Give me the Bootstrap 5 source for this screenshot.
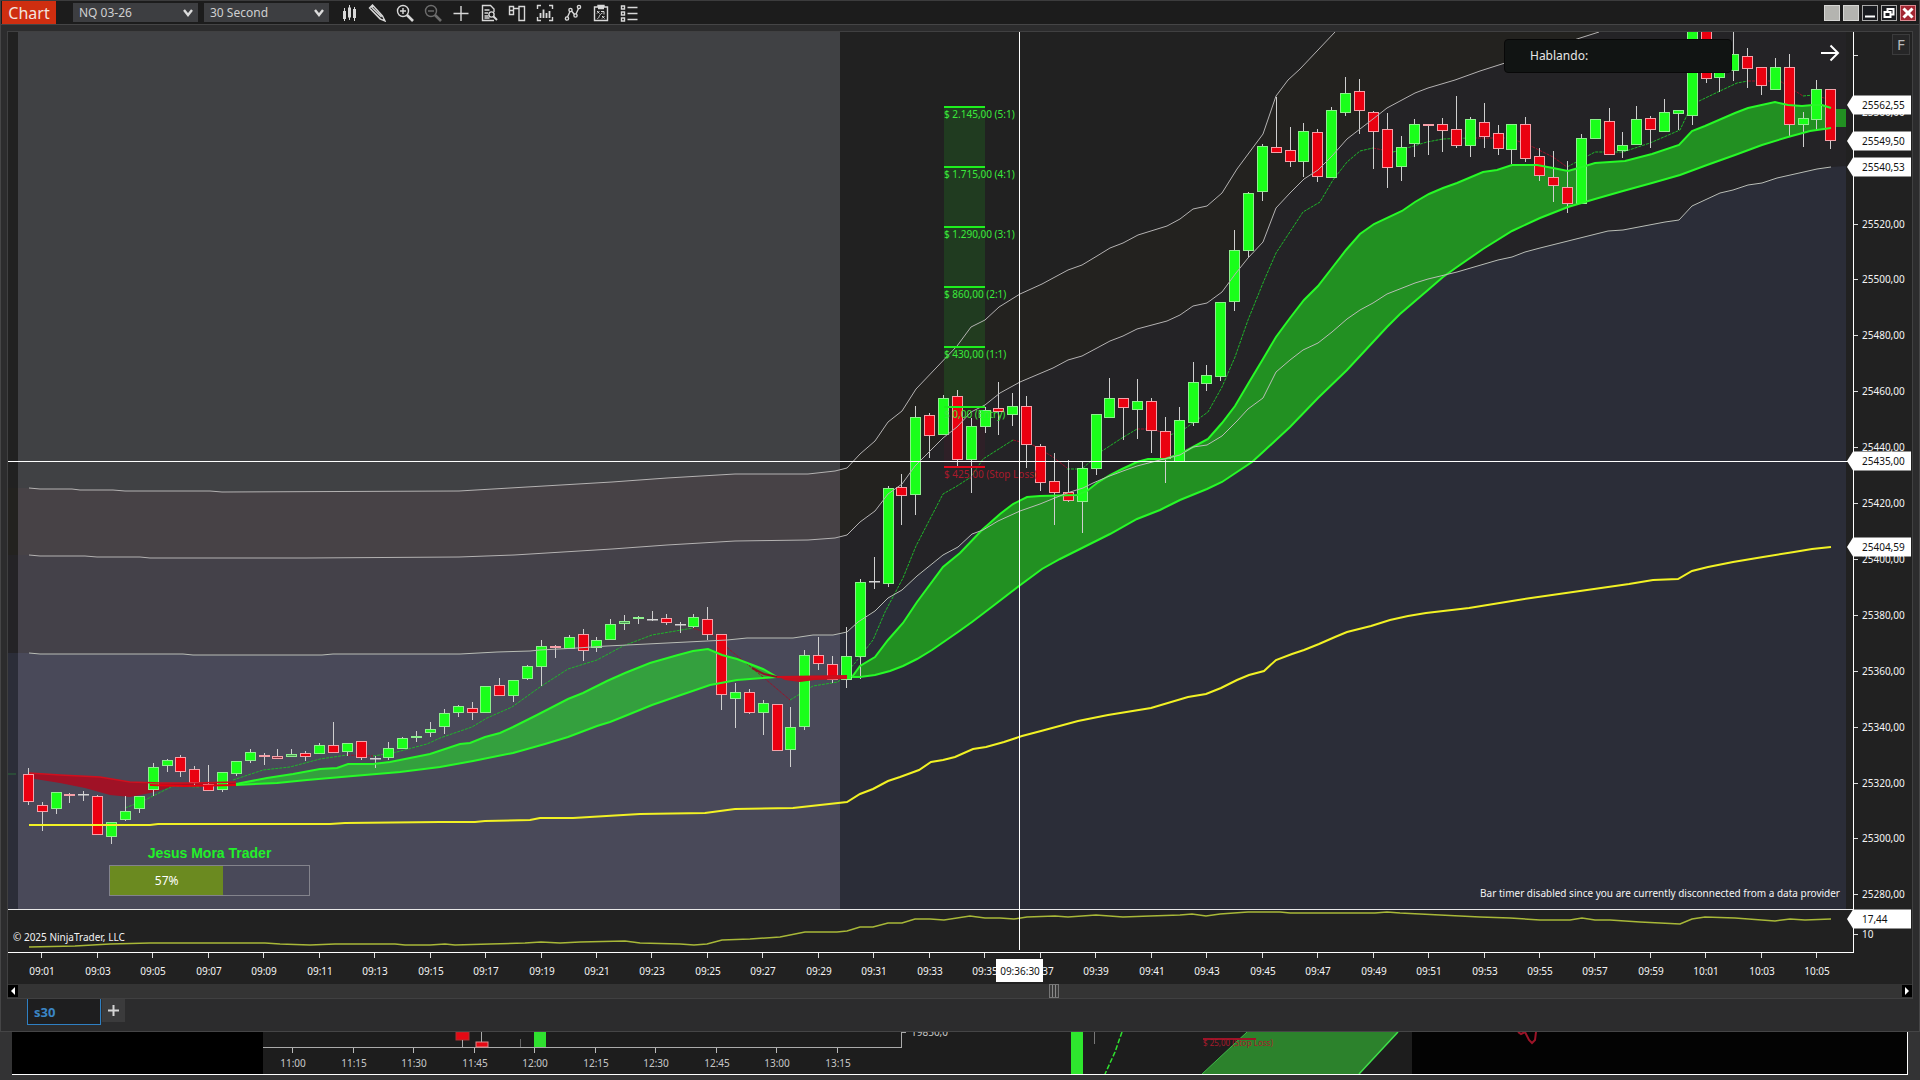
<!DOCTYPE html>
<html lang="es">
<head>
<meta charset="utf-8">
<meta name="viewport" content="width=device-width, initial-scale=1">
<title>Chart - NQ 03-26</title>
<link href="https://cdn.jsdelivr.net/npm/bootstrap@5.3.0/dist/css/bootstrap.min.css" rel="stylesheet">
<style>
  body{background:#333334;color:#fff;font-family:"Noto Sans","Open Sans",sans-serif;font-size:12px;overflow-x:hidden}
  .win{background:#2c2c2d;border:1px solid #454546;border-top:0}
  .titlebar{background:#1c1c1c;height:25px;border-top:1px solid #3c3c3d;border-bottom:1px solid #454546}
  .brand{background:#cf2e10;color:#f3e3df;font-size:16px;line-height:22px;height:23px;width:54px;border:0;padding:0;margin-left:1px;margin-right:11px}
  .picks{gap:6px;padding:0 6px}
  .picker{height:19px;width:125px;border:0;border-radius:0;padding:0 20px 0 6px;font-size:12px;line-height:19px;color:#cfcfd0;background-color:#3d3e41;background-size:10px 8px;background-position:right 5px center;background-image:url("data:image/svg+xml,%3csvg xmlns='http://www.w3.org/2000/svg' viewBox='0 0 10 8'%3e%3cpath d='M1 1l4 5 4-5' fill='none' stroke='%23dcdcdc' stroke-width='2.4'/%3e%3c/svg%3e")}
  .tool{width:28px;height:22px;border:0;padding:0;background:none;color:#d8d8d8}
  .tool svg{width:18px;height:18px;fill:none;stroke:currentColor;stroke-width:1.4}
  .tool.off{color:#6d6d6d}
  .winctl{gap:3px;padding-right:3px}
  .ctl{width:16px;height:16px;border:1px solid #aaa;padding:0;background:#191b1f}
  .ctl svg{width:14px;height:14px;fill:none;stroke:#fff;stroke-width:2}
  .ctl.plain{background:#b4b4b0;border-color:#d6d6d4}
  .ctl.shut{background:#a32632;border-color:#d98a92}
  .frame{margin:6px 6px 0;border:1px solid #404041}
  .plot{display:block;width:100%;height:auto;background:#212121}
  .plot text,.under text{font-family:"Noto Sans","Open Sans",sans-serif;font-size:10px;fill:#f4f4f4}
  .plot text.ink{fill:#111}
  .plot text.rr{fill:#3bea3b}
  .plot text.stop{fill:#a81a2c}
  .talk{right:180px;top:7px;width:228px;height:34px;background:#111413;border:1px solid #080808;border-radius:4px;padding-left:25px;font-size:12px;line-height:32px;color:#e6e6e6}
  .arrow{right:72px;top:12px;border:0;background:none;padding:0}
  .fixbtn{right:2px;top:2px;width:18px;height:21px;background:#262627;border:1px solid #3b3b3c;color:#b8b8ba;font-size:15px;line-height:17px;padding:0}
  .buyers{left:101px;bottom:88px;width:201px}
  .buyers .title{font-family:"Liberation Sans",Arial,sans-serif;font-weight:700;font-size:14px;line-height:16px;color:#22f02a;margin-bottom:4px}
  .buyers .progress{height:31px;border-radius:0;background:none;border:1px solid #83838c}
  .buyers .progress-bar{background:#6b8a20;font-size:12px;color:#fff}
  .scroller{height:14px;background:#343434}
  .step{width:10px;height:12px;border:0;padding:0;background:#000;color:#fff}
  .step svg{display:block;width:10px;height:12px;fill:#fff}
  .slide{appearance:none;background:none;height:14px;margin:0;min-width:0}
  .slide::-webkit-slider-thumb{appearance:none;width:10px;height:14px;border:1px solid #757575;background:repeating-linear-gradient(90deg,#3a3a3a 0 2px,#8a8a8a 2px 3px)}
  .tabs{height:32px;padding-left:26px}
  .tabbtn{width:74px;height:26px;background:#1e1e1f;border:1px solid #2f80c3;border-top:0;color:#3b86c6;font-family:"Open Sans","Noto Sans",sans-serif;font-weight:700;font-size:13px;line-height:24px;text-align:left;padding:0 6px}
  .addbtn{width:23px;height:23px;background:#3b3b3c;border:0;padding:0;color:#d5d5d5;margin-left:1px}
  .addbtn svg{width:11px;height:11px;stroke:currentColor;stroke-width:2}
  .under{display:block;width:100%;height:auto}
</style>
<script src="https://cdn.jsdelivr.net/npm/bootstrap@5.3.0/dist/js/bootstrap.bundle.min.js"></script>
</head>
<body>
<main class="win d-flex flex-column">
  <header class="titlebar d-flex align-items-center">
    <button class="brand" type="button">Chart</button>
    <div class="picks d-flex">
      <select class="form-select picker" aria-label="Instrument"><option>NQ 03-26</option></select>
      <select class="form-select picker" aria-label="Interval"><option>30 Second</option></select>
    </div>
    <nav class="d-flex" aria-label="Chart tools">
      <button class="tool" type="button" aria-label="Chart style"><svg viewBox="0 0 18 18"><path d="M4.500 4v13M9.500 1v15M14.500 3v14" stroke-width="1"/><path d="M4.500 7v8M9.500 3.500v10M14.500 5v9" stroke-width="3"/></svg></button>
      <button class="tool" type="button" aria-label="Drawing tools"><svg viewBox="0 0 18 18"><path d="M1.500 4l3-3 10 11 2.500 5-5-2zM3 5.500l9.500 9.500M4.500 4l9 9M3 2.500l2 2"/></svg></button>
      <button class="tool" type="button" aria-label="Zoom in"><svg viewBox="0 0 18 18"><circle cx="7" cy="7" r="5.500"/><path d="M4 7h6M7 4v6"/><path d="M11 11l6 6" stroke-width="2.600"/></svg></button>
      <button class="tool off" type="button" aria-label="Zoom out" disabled><svg viewBox="0 0 18 18"><circle cx="7" cy="7" r="5.500"/><path d="M4 7h6"/><path d="M11 11l6 6" stroke-width="2.600"/></svg></button>
      <button class="tool" type="button" aria-label="Crosshair"><svg viewBox="0 0 18 18"><path d="M1.500 9.500h15M9 2v15"/></svg></button>
      <button class="tool" type="button" aria-label="Data box"><svg viewBox="0 0 18 18"><path d="M14 8V5l-3.500-3.500H2.500v15H14M4.500 6h5M4.500 9h3.500M4.500 12h4M4.500 14h5"/><circle cx="11.500" cy="10.500" r="2.600"/><path d="M13.500 12.500l3.500 3.500" stroke-width="2"/></svg></button>
      <button class="tool" type="button" aria-label="Chart trader"><svg viewBox="0 0 18 18"><path d="M1.500 2.500h4v4h-4zM1.500 6.500h4v4h-4zM11 2.500h5.500v14H11zM5.500 4.500H11"/></svg></button>
      <button class="tool" type="button" aria-label="Data series"><svg viewBox="0 0 18 18"><path d="M5 1.500H1.500V5M13 1.500h3.500V5M5 16.500H1.500V13M13 16.500h3.500V13"/><path d="M4.500 9v5M7.500 5.500V14M10.500 9v5M13.500 7v7" stroke-width="1.800"/></svg></button>
      <button class="tool" type="button" aria-label="Indicators"><svg viewBox="0 0 18 18"><circle cx="3" cy="14.500" r="1.600"/><circle cx="6.500" cy="6" r="1.600"/><circle cx="11.500" cy="11.500" r="1.600"/><circle cx="15" cy="3" r="1.600"/><path d="M3.500 13L6 7.500M7.500 7l3 3.500M12 10l2.500-5.500"/></svg></button>
      <button class="tool" type="button" aria-label="Strategies"><svg viewBox="0 0 18 18"><path d="M2.500 3h13v13.500h-13zM6 3V1.500h6V3M6 4.500h6"/><path d="M5 7l2.500 2.500M7.500 7L5 9.500M10 12l2.500 2.500M12.500 12L10 14.500M5.500 14.500c2 0 1-4 5-5.500M9 7.500h3v3" stroke-width="1"/></svg></button>
      <button class="tool" type="button" aria-label="Properties"><svg viewBox="0 0 18 18"><path d="M1.500 2h3v3h-3zM1.500 8h3v3h-3zM1.500 14h3v3h-3zM7.500 3.500h10M7.500 9.500h10M7.500 15.500h10"/></svg></button>
    </nav>
    <div class="winctl d-flex ms-auto">
      <button class="ctl plain" type="button" aria-label="Link instrument"></button>
      <button class="ctl plain" type="button" aria-label="Link interval"></button>
      <button class="ctl d-flex" type="button" aria-label="Minimize"><svg viewBox="0 0 14 14"><path d="M2 10.500h10"/></svg></button>
      <button class="ctl d-flex" type="button" aria-label="Restore"><svg viewBox="0 0 14 14"><path d="M5.500 6V3h6v5.500H9M2.500 6h6v5h-6z"/></svg></button>
      <button class="ctl shut d-flex" type="button" aria-label="Close"><svg viewBox="0 0 14 14"><path d="M2.500 2.500l9 9M11.500 2.500l-9 9" stroke-width="3"/></svg></button>
    </div>
  </header>

  <section class="frame">
    <div class="position-relative">
      <svg class="plot" id="plot" viewBox="8 32 1904 952" role="img" aria-label="NQ 03-26, 30 Second"></svg>
      <div class="talk position-absolute">Hablando:</div>
      <button class="arrow position-absolute d-flex" type="button" aria-label="Go to last bar"><svg width="20" height="18" viewBox="0 0 20 18" fill="none" stroke="#fff" stroke-width="2"><path d="M1 9h17M10.500 1.500L18 9l-7.500 7.500"/></svg></button>
      <button class="fixbtn position-absolute" type="button">F</button>
      <div class="buyers position-absolute">
        <div class="title text-center" id="lbl">Jesus Mora Trader</div>
        <div class="progress" role="progressbar" aria-labelledby="lbl" aria-valuenow="57" aria-valuemin="0" aria-valuemax="100">
          <div class="progress-bar" style="width:57%">57%</div>
        </div>
      </div>
    </div>
    <div class="scroller d-flex align-items-center">
      <button class="step" type="button" aria-label="Scroll left"><svg viewBox="0 0 10 12"><path d="M7 2v8L3 6z"/></svg></button>
      <input class="slide flex-grow-1" type="range" min="0" max="1000" value="550" aria-label="Scroll chart">
      <button class="step" type="button" aria-label="Scroll right"><svg viewBox="0 0 10 12"><path d="M3 2v8l4-4z"/></svg></button>
    </div>
  </section>
  <nav class="tabs d-flex align-items-start" aria-label="Tabs">
    <button class="tabbtn" type="button">s30</button>
    <button class="addbtn d-flex align-items-center justify-content-center" type="button" aria-label="Add tab"><svg viewBox="0 0 11 11"><path d="M0 5.500h11M5.500 0v11"/></svg></button>
  </nav>
</main>
<svg class="under" id="under" viewBox="0 1032 1920 48" role="img" aria-label="Background chart"></svg>

<script>
// Bars: [index, body top, body bottom, high, low, g = up / r = down / d = doji]
const bars = [
[0,774,802,768,805,'r'],[1,805,812,802,831,'r'],[2,792,809,792,814,'g'],[3,794,796,793,803,'r'],[4,794,794,791,801,'d'],[5,796,835,795,835,'r'],[6,822,837,822,844,'g'],[7,811,820,796,821,'g'],[8,796,809,796,813,'g'],[9,767,790,763,796,'g'],[10,760,766,759,772,'g'],[11,757,772,755,777,'r'],[12,769,783,766,785,'r'],[13,784,791,765,791,'r'],[14,772,790,772,792,'g'],[15,761,774,761,776,'g'],[16,752,761,749,763,'g'],[17,755,757,753,765,'r'],[18,756,759,749,759,'r'],[19,754,757,749,757,'g'],[20,753,757,751,761,'r'],[21,745,754,743,754,'g'],[22,745,753,722,753,'r'],[23,743,752,743,756,'g'],[24,741,758,741,760,'r'],[25,758,758,756,768,'d'],[26,748,758,742,760,'g'],[27,738,749,737,749,'g'],[28,736,738,731,742,'g'],[29,729,733,722,737,'g'],
[30,713,727,709,734,'g'],[31,706,713,705,717,'g'],[32,708,713,702,720,'r'],[33,686,713,686,713,'g'],[34,685,696,678,696,'r'],[35,680,696,680,702,'g'],[36,666,679,665,680,'g'],[37,646,667,640,686,'g'],[38,646,648,645,658,'r'],[39,637,649,635,649,'g'],[40,634,651,629,661,'r'],[41,640,648,637,652,'g'],[42,624,640,619,640,'g'],[43,621,624,615,630,'g'],[44,617,619,616,624,'g'],[45,619,619,611,621,'d'],[46,618,623,614,625,'r'],[47,624,624,622,633,'d'],[48,617,627,614,628,'g'],[49,619,635,607,640,'r'],
[50,634,695,634,710,'r'],[51,692,699,683,728,'g'],[52,692,713,689,714,'r'],[53,703,713,700,735,'g'],[54,704,751,704,751,'r'],[55,727,750,707,767,'g'],[56,655,727,650,730,'g'],[57,655,664,637,670,'r'],[58,664,680,656,683,'r'],[59,656,680,627,688,'g'],[60,582,657,579,679,'g'],[61,581,581,557,589,'d'],[62,488,584,486,587,'g'],[63,487,496,474,525,'r'],[64,417,495,406,515,'g'],[65,415,436,413,458,'r'],[66,398,435,395,435,'g'],[67,396,460,390,468,'r'],[68,426,460,418,493,'g'],[69,410,427,407,433,'g'],[70,408,412,382,435,'r'],[71,406,415,393,426,'g'],[72,406,445,396,468,'r'],[73,446,483,444,491,'r'],[74,481,493,453,525,'r'],[75,492,501,460,502,'r'],[76,468,502,462,533,'g'],[77,414,469,414,475,'g'],[78,398,418,378,418,'g'],[79,398,408,398,440,'r'],[80,401,410,379,439,'g'],[81,401,431,398,453,'r'],
[82,431,459,417,483,'r'],[83,420,462,407,462,'g'],[84,382,423,362,426,'g'],[85,375,384,365,391,'g'],[86,302,377,302,381,'g'],[87,250,302,230,311,'g'],[88,193,251,192,257,'g'],[89,146,192,144,201,'g'],[90,147,153,97,153,'r'],[91,150,162,127,167,'r'],[92,131,162,123,177,'g'],[93,132,177,129,182,'r'],[94,110,178,107,178,'g'],[95,93,113,77,116,'g'],[96,91,111,79,134,'r'],[97,112,132,111,169,'r'],[98,129,168,113,188,'r'],[99,147,167,136,181,'g'],[100,124,144,119,157,'g'],[101,124,126,124,155,'r'],[102,124,131,118,152,'r'],[103,129,146,96,148,'r'],[104,119,146,117,157,'g'],[105,122,137,103,148,'r'],[106,133,149,125,155,'r'],[107,124,150,124,164,'g'],[108,124,159,117,162,'r'],[109,156,176,148,181,'r'],
[110,177,186,151,202,'r'],[111,187,204,161,213,'r'],[112,138,204,134,204,'g'],[113,119,139,119,139,'g'],[114,121,155,108,155,'r'],[115,145,151,132,158,'g'],[116,119,145,106,145,'g'],[117,118,130,116,148,'r'],[118,112,132,99,132,'g'],[119,110,114,110,130,'g'],[120,25,116,25,125,'g'],[121,25,79,25,83,'r'],[122,60,78,60,92,'g'],[123,54,71,25,81,'g'],[124,56,69,48,88,'r'],[125,67,86,67,95,'r'],[126,67,90,58,90,'g'],[127,67,125,54,136,'r'],[128,118,125,112,147,'g'],[129,89,120,80,130,'g'],[130,89,141,89,149,'r']];

const low = '29,653 40,654 183,654 193,655 322,655 333,654 460,654 497,652 530,651 540,650 577,648 607,646 647,644 687,642 727,640 747,638 793,638 813,635 833,635 847,632 858,622 875,611 888,598 902,590 917,576 943,555 958,547 972,534 983,530 998,521 1020,511 1040,504 1067,493 1083,488 1093,483 1107,477 1123,471 1137,466 1160,460 1180,455 1193,447 1207,445 1222,436 1237,421 1248,409 1263,398 1276,372 1290,360 1303,350 1318,343 1332,332 1347,319 1360,310 1373,303 1387,294 1415,283 1428,279 1457,272 1498,260 1512,257 1525,252 1540,248 1608,231 1623,230 1665,222 1679,220 1692,206 1720,193 1733,190 1748,185 1762,183 1777,178 1817,169 1831,167';
const mid = '29,555 40,556 85,556 97,557 140,557 150,558 306,558 459,557 514,555 612,549 667,545 735,541 808,540 835,538 847,535 860,522 875,511 888,494 902,484 915,466 943,438 957,427 971,412 985,405 1000,393 1020,382 1053,368 1068,360 1082,356 1097,348 1110,341 1123,336 1137,329 1167,321 1180,315 1193,306 1207,303 1222,292 1236,273 1248,258 1263,242 1276,208 1290,193 1304,179 1318,170 1332,156 1347,139 1360,129 1373,119 1387,108 1415,93 1428,88 1455,80 1480,71 1505,63 1577,39 1599,32';
const top1 = '29,488 40,489 72,489 80,490 113,490 125,491 210,491 222,492 459,491 527,487 612,482 667,478 735,474 808,474 835,471 847,468 860,454 875,441 888,422 902,411 916,389 957,346 971,327 985,320 999,307 1020,294 1042,284 1068,270 1082,265 1097,256 1110,248 1123,243 1138,235 1167,226 1180,219 1193,209 1207,206 1222,193 1237,169 1263,134 1276,96 1288,80 1300,69 1335,32';
const vwap = '29,825 150,825 158,824 330,824 345,823 440,822 475,822 485,821 530,820 540,818 573,818 640,814 705,813 735,809 793,808 847,802 860,794 873,789 888,781 900,777 919,770 931,762 943,760 955,757 973,749 986,747 1004,742 1022,736 1041,731 1078,721 1108,715 1151,708 1188,697 1206,694 1221,688 1237,680 1249,675 1264,671 1276,660 1292,654 1304,650 1319,644 1335,637 1347,632 1371,626 1390,620 1408,616 1426,613 1469,608 1512,601 1531,598 1580,591 1629,584 1653,580 1678,579 1692,571 1708,567 1733,562 1763,557 1794,552 1812,549 1831,547';
const up1 = '236,784 267,778 293,774 320,769 337,768 348,764 373,764 390,762 410,758 430,754 460,744 470,743 485,737 500,733 513,727 537,715 568,699 583,693 607,681 625,673 650,663 678,655 693,651 708,649 722,655 737,659 763,669 777,677';
const dn1 = '236,785 277,783 307,780 353,776 400,772 440,767 473,761 513,753 545,744 568,737 597,726 610,722 625,716 652,705 678,696 710,685 737,680 763,678 777,677';
const up2 = '852,677 860,666 875,657 888,640 903,623 917,602 943,567 960,553 982,530 1000,514 1013,504 1027,497 1040,496 1077,495 1087,491 1097,483 1110,475 1122,469 1137,462 1148,459 1165,459 1180,454 1193,447 1208,439 1222,423 1235,406 1248,384 1263,359 1276,337 1290,318 1304,300 1318,286 1332,268 1346,250 1360,234 1374,224 1402,211 1415,202 1429,194 1443,188 1457,183 1483,172 1497,170 1512,165 1537,165 1553,168 1568,171 1582,167 1595,163 1625,161 1652,154 1679,145 1692,131 1705,126 1735,113 1748,108 1775,102 1788,105 1802,106 1813,105 1822,105 1831,108';
const dn2 = '852,677 860,677 875,675 890,671 903,666 917,659 932,650 945,641 958,632 972,622 993,606 1019,586 1042,569 1060,559 1082,548 1110,534 1137,519 1160,510 1180,500 1207,489 1222,482 1252,462 1263,452 1276,440 1290,427 1318,398 1347,370 1387,327 1400,314 1428,290 1443,277 1457,267 1483,249 1512,231 1540,218 1568,207 1595,199 1623,191 1652,183 1680,175 1707,165 1735,155 1762,145 1788,137 1810,131 1831,128';
const ribT = '29,773 60,775 100,777 130,782 160,783 195,783 236,782';
const ribB = '29,778 60,783 85,788 110,795 130,797 150,793 175,786 195,786 236,785';
const osc = '29,947 75,946 110,944 150,943 265,943 280,944 310,945 335,944 395,944 405,945 430,945 445,944 455,945 490,944 525,943 541,942 560,943 580,942 625,941 640,943 680,944 694,945 707,944 722,940 750,939 780,937 805,932 837,932 847,931 860,927 873,927 888,923 902,923 915,919 930,919 944,920 970,916 985,918 1000,918 1014,919 1027,917 1055,916 1068,917 1096,915 1123,917 1150,916 1180,915 1192,914 1206,916 1220,914 1248,912 1280,912 1290,913 1375,913 1387,912 1400,913 1440,915 1480,917 1510,918 1540,920 1570,920 1582,918 1595,920 1610,920 1640,922 1680,924 1692,919 1705,917 1735,918 1775,921 1790,919 1805,920 1831,919';
// Fast average, alternating rising (green) and falling (red) runs
const fast = [
['g','125,808 143,801 173,786 200,787'],['g','233,780 263,770 290,767 320,759 347,755'],['r','347,755 373,756'],['g','373,756 393,753 427,744 440,738 472,727 487,718 512,707 540,687 568,669 597,660 623,646 652,635 693,628'],
['r','693,628 713,635 730,650 763,677 790,700'],['g','790,700 813,686 838,682 855,663 873,640 885,612 903,578 916,546 943,494 957,486 971,477 983,459 1013,440'],
['r','1013,440 1033,445 1053,457 1067,468'],['g','1067,469 1082,469 1102,451 1122,438 1137,429'],['r','1137,429 1152,429 1170,435'],
['g','1170,435 1183,430 1208,412 1222,387 1235,357 1248,320 1263,283 1276,253 1303,212 1320,202 1333,180 1347,162 1360,151 1373,148'],['r','1373,148 1393,152'],['g','1393,152 1407,148 1427,142 1443,139 1470,138'],['r','1470,138 1510,138 1533,147 1553,157 1567,167'],
['g','1567,167 1595,152 1623,152 1650,143 1680,130 1688,113 1697,102 1720,91 1737,83 1748,81'],['r','1748,81 1780,81 1803,96'],['g','1803,96 1814,95'],['r','1814,95 1831,100']];

const X = i => Math.round(27.9 + 13.865 * i);
const rev = s => s.split(' ').reverse().join(' ');
const poly = (p, fill) => `<polygon points="${p}" fill="${fill}"/>`;
const line = (p, c, w, extra = '') => `<polyline points="${p}" fill="none" stroke="${c}" stroke-width="${w}" ${extra}/>`;
const rect = (x, y, w, h, f, extra = '') => `<rect x="${x}" y="${y}" width="${w}" height="${h}" fill="${f}" ${extra}/>`;
const text = (x, y, t, cls = '', a = 'start') => `<text x="${x}" y="${y}" class="${cls}" text-anchor="${a}">${t}</text>`;

function bands(id, c) {
  return `<g clip-path="url(#${id})">` + rect(8, 32, 1838, 877, c[0]) +
    poly(`8,488 ${top1} 1846,32 1846,909 8,909`, c[1]) +
    poly(`8,555 ${mid} 1846,32 1846,909 8,909`, c[2]) +
    poly(`8,653 ${low} 1846,166 1846,909 8,909`, c[3]) + '</g>';
}
let s = `<defs><clipPath id="pre">${rect(18,32,822,877,'#000')}</clipPath><clipPath id="reg"><path d="M8 32h10v877H8zM840 32h1006v877H840z"/></clipPath><clipPath id="pane">${rect(8,32,1838,877,'#000')}</clipPath></defs>`;
s += bands('reg', ['#212121', '#23221f', '#242326', '#2b2d38']);
s += bands('pre', ['#404144', '#474246', '#444149', '#494959']);
s += rect(944, 107, 41, 300, '#1ef01e', 'fill-opacity=".13"') + rect(944, 407, 41, 60, '#a00030', 'fill-opacity=".08"');
s += '<g clip-path="url(#pane)">';
s += poly(`${up1} ${rev(dn1)}`, '#34a03e') + poly(`${up2} ${rev(dn2)}`, '#229022') + poly(`${ribT} ${rev(ribB)}`, '#a01226');
s += rect(1834, 109, 12, 18, '#229022');
fast.forEach(f => s += line(f[1], f[0] === 'g' ? '#1fb52a' : '#9c1028', 1, 'stroke-dasharray="3 1"'));
for (const [i, t, b, h, l, k] of bars) {
  const x = X(i), edge = k === 'g' ? '#8df08d' : k === 'r' ? '#f5a0a8' : '#d5d5d5';
  s += `<path d="M${x + .5} ${h}V${l}" stroke="#cfcfcf"/>`;
  if (k === 'd') s += rect(x - 5, t, 11, 1.5, '#d5d5d5');
  else {
    const thin = b - t < 4;
    s += rect(x - 4.5, t + .5, 10, Math.max(b - t - 1, 1), thin ? (k === 'g' ? '#4d9a55' : '#8a3340') : (k === 'g' ? '#1aff1a' : '#ea0010'), `stroke="${edge}"`);
  }
}
s += line(top1, '#b4b2b2', 1) + line(mid, '#b4b2b2', 1);
[up1, dn1, up2, dn2].forEach(p => s += line(p, '#27fa27', 2));
s += line(low, '#b9bdb6', 1);
s += line(ribT, '#d0101e', 1.5) + line('150,785 185,786 236,785', '#e8000f', 2);
s += poly('777,676 847,675 847,679 815,680 800,682 785,680', '#c4101e') + line('777,677 847,677', '#cf0d1c', 2);
s += line('752,668 764,674 777,677', '#8e1026', 2);
s += line(vwap, '#f2f224', 2) + line('8,774 16,774', '#2c6a38', 1) + '</g>';

[['2.145,00 (5:1)', 107], ['1.715,00 (4:1)', 167], ['1.290,00 (3:1)', 227], ['860,00 (2:1)', 287], ['430,00 (1:1)', 347], ['0,00 (Entry)', 407]].forEach(([t, y]) => {
  s += rect(944, y - 1, 41, 2, '#1ef01e') + text(944, y + 11, '$ ' + t, 'rr');
});
s += rect(944, 466, 41, 2, '#e00a1c') + text(944, 478, '$ 425,00 (Stop Loss)', 'stop');

// panel separators, axes and crosshair
s += rect(8, 909, 1845, 1, '#e8e8e8') + line(osc, '#a8b838', 1.5);
s += rect(8, 952, 1846, 1, '#fff') + rect(1853, 32, 1, 921, '#fff');
s += rect(1019, 32, 1, 918, '#fff') + rect(8, 461, 1845, 1, '#fff');
for (let k = 0; k < 33; k++) {
  const x = Math.round(41.3 + 55.47 * k), m = 541 + 2 * k;
  s += rect(x, 953, 1, 5, '#ddd') + text(x + 1, 975, String(Math.floor(m / 60)).padStart(2, '0') + ':' + String(m % 60).padStart(2, '0'), '', 'middle');
}
s += rect(1854, 55, 4, 1, '#ddd');
for (let p = 25560, k = 0; p >= 25280; p -= 20, k++) {
  const y = Math.round(111.700 + 55.9 * k);
  s += rect(1854, y, 4, 1, '#ddd') + text(1862, y + 4, p + ',00');
}
s += rect(1854, 934, 4, 1, '#ddd') + text(1862, 938, '10');
[['25562,55', 105], ['25549,50', 141], ['25540,53', 167], ['25435,00', 461], ['25404,59', 547], ['17,44', 919]].forEach(([t, y]) => {
  s += poly(`1847,${y} 1853,${y - 9.5} 1911,${y - 9.5} 1911,${y + 9.5} 1853,${y + 9.5}`, '#fff') + text(1862, y + 4, t, 'ink');
});
s += rect(996, 959, 47, 23, '#fff') + text(1020, 975, '09:36:30', 'ink', 'middle');
s += text(1840, 897, 'Bar timer disabled since you are currently disconnected from a data provider', '', 'end');
s += text(13, 941, '© 2025 NinjaTrader, LLC');
document.getElementById('plot').innerHTML = s;

// strip of the chart window that lies behind
let u = rect(0, 1032, 1920, 48, '#333334') + rect(12, 1032, 1896, 42, '#1d1d1d') + rect(12, 1032, 251, 42, '#000') + rect(1412, 1032, 495, 42, '#030303');
u += rect(263, 1047, 639, 1, '#aaa') + rect(901, 1032, 1, 16, '#aaa') + rect(901, 1032, 5, 1, '#aaa');
['11:00','11:15','11:30','11:45','12:00','12:15','12:30','12:45','13:00','13:15'].forEach((t, k) => {
  const x = Math.round(292 + 60.5 * k);
  u += rect(x, 1048, 1, 5, '#bbb') + `<text x="${x + 1}" y="1067" text-anchor="middle" fill-opacity=".8">${t}</text>`;
});
u += `<text x="911" y="1036" fill-opacity=".8">19850,0</text>`;
u += rect(456, 1032, 13, 8, '#e50914', 'stroke="#a33"') + rect(462, 1040, 1, 7, '#aaa') + rect(476, 1042, 12, 5, '#e50914', 'stroke="#d88"') + rect(481, 1032, 1, 10, '#aaa') + rect(520, 1039, 1, 8, '#666') + rect(534, 1032, 12, 15, '#2fe02f');
u += rect(1071, 1032, 12, 42, '#2ee62e') + rect(1094, 1032, 1, 12, '#777') + line('1122,1032 1115,1052 1105,1074', '#2fe02f', 1.5, 'stroke-dasharray="5 2"');
u += poly('1202,1074 1247,1032 1398,1032 1359,1074', '#2c822c') + line('1202,1074 1247,1032', '#3fb84a', 1) + line('1359,1074 1398,1032', '#3fe04a', 1.5);
u += rect(1203, 1038, 53, 2, '#9c1428') + `<text x="1203" y="1046" style="fill:#a81a2c;font-size:8px">$ 25,00 (Stop Loss)</text>`;
u += line('1518,1032 1521,1034 1525,1032 1529,1040 1532,1043 1535,1040 1536,1032', '#9c1428', 2);
u += rect(12, 1074, 1896, 1, '#fff') + rect(1907, 1032, 1, 43, '#fff');
document.getElementById('under').innerHTML = u;
</script>
</body>
</html>
